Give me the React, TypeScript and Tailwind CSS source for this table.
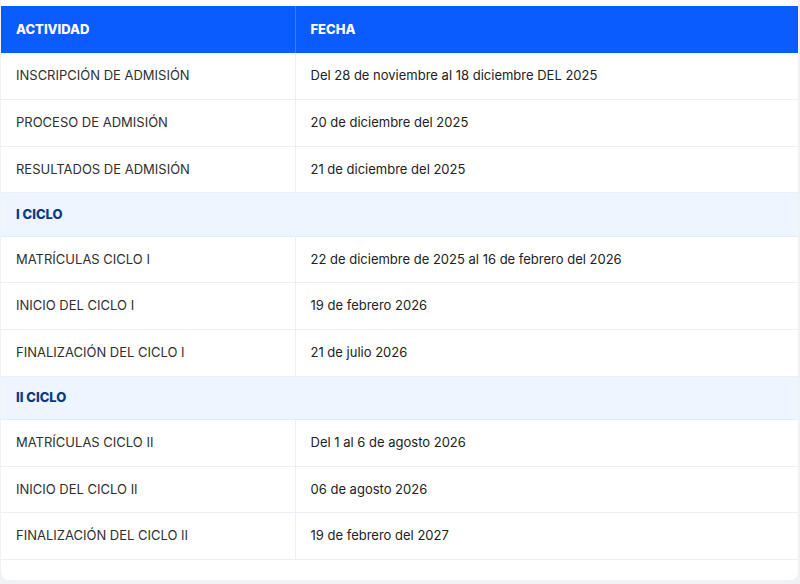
import React from "react";

type Row = { actividad: string; fecha?: string; section?: boolean };

const rows: Row[] = [
  { actividad: "INSCRIPCIÓN DE ADMISIÓN", fecha: "Del 28 de noviembre al 18 diciembre DEL 2025" },
  { actividad: "PROCESO DE ADMISIÓN", fecha: "20 de diciembre del 2025" },
  { actividad: "RESULTADOS DE ADMISIÓN", fecha: "21 de diciembre del 2025" },
  { actividad: "I CICLO", section: true },
  { actividad: "MATRÍCULAS CICLO I", fecha: "22 de diciembre de 2025 al 16 de febrero del 2026" },
  { actividad: "INICIO DEL CICLO I", fecha: "19 de febrero 2026" },
  { actividad: "FINALIZACIÓN DEL CICLO I", fecha: "21 de julio 2026" },
  { actividad: "II CICLO", section: true },
  { actividad: "MATRÍCULAS CICLO II", fecha: "Del 1 al 6 de agosto 2026" },
  { actividad: "INICIO DEL CICLO II", fecha: "06 de agosto 2026" },
  { actividad: "FINALIZACIÓN DEL CICLO II", fecha: "19 de febrero del 2027" },
];

const App: React.FC = () => {
  return (
    <div className="min-h-[584px] w-[800px] bg-[#f1f2f6] font-['Inter',sans-serif]">
      <div className="ml-px w-[797px] rounded-b-lg bg-white pt-[6px] pb-[20px]">
        <table className="w-full border-collapse text-[13px]">
          <thead>
            <tr className="h-[47px] bg-[#0a5cff] text-white">
              <th className="w-[294px] border-r border-[#3b7bff] px-[15px] text-left font-extrabold">
                ACTIVIDAD
              </th>
              <th className="px-[15px] text-left font-extrabold">FECHA</th>
            </tr>
          </thead>
          <tbody>
            {rows.map((row) =>
              row.section ? (
                <tr
                  key={row.actividad}
                  className="h-[43.5px] border-b border-[#e3ecfb] bg-[#edf5ff]"
                >
                  <td colSpan={2} className="px-[15px] font-extrabold text-[#0b3a82]">
                    {row.actividad}
                  </td>
                </tr>
              ) : (
                <tr key={row.actividad} className="h-[46.6px] border-b border-[#eceff5]">
                  <td className="border-r border-[#eceff5] px-[15px] text-[#2f2f2f]">
                    {row.actividad}
                  </td>
                  <td className="px-[15px] text-[#222]">{row.fecha}</td>
                </tr>
              )
            )}
          </tbody>
        </table>
      </div>
    </div>
  );
};

export default App;
